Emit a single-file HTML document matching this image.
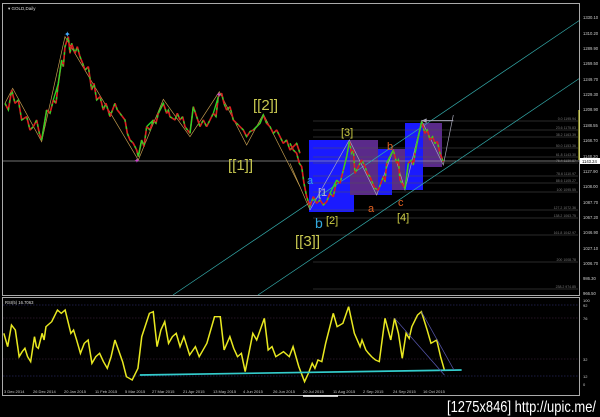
<!DOCTYPE html>
<html><head><meta charset="utf-8"><style>
html,body{margin:0;padding:0;background:#000;width:600px;height:417px;overflow:hidden}
svg{display:block}
text{font-family:"Liberation Sans",sans-serif}
</style></head><body>
<svg width="600" height="417" viewBox="0 0 600 417" xmlns="http://www.w3.org/2000/svg">
<rect width="600" height="417" fill="#000"/>
<rect x="2.5" y="3.5" width="577" height="292" fill="none" stroke="#aaa" stroke-width="1"/>
<text x="8" y="10" font-size="4.5" fill="#ddd">▾ GOLD,Daily</text>
<rect x="309" y="140" width="45" height="72" fill="#1a1aff"/>
<rect x="350" y="140" width="28" height="55" fill="#5a2a8a"/>
<rect x="378" y="149" width="14" height="46" fill="#1a1aff"/>
<rect x="392" y="149" width="31" height="41" fill="#5a2a8a"/>
<rect x="405" y="123" width="18" height="67" fill="#1a1aff"/>
<rect x="423" y="123" width="19" height="44" fill="#5a2a8a"/>
<g stroke="#555" stroke-width="0.6">
<line x1="313" y1="121" x2="578" y2="121"/><line x1="313" y1="130" x2="578" y2="130"/>
<line x1="313" y1="137" x2="578" y2="137"/><line x1="313" y1="148" x2="578" y2="148"/>
<line x1="313" y1="157" x2="578" y2="157"/><line x1="313" y1="163" x2="578" y2="163"/>
<line x1="313" y1="176" x2="578" y2="176"/><line x1="313" y1="183" x2="578" y2="183"/>
<line x1="313" y1="192" x2="578" y2="192"/><line x1="313" y1="210" x2="578" y2="210"/>
<line x1="313" y1="218" x2="578" y2="218"/><line x1="313" y1="235" x2="578" y2="235"/>
<line x1="313" y1="262" x2="578" y2="262"/><line x1="313" y1="289" x2="578" y2="289"/>
</g>
<g font-size="3.5" fill="#777" text-anchor="end">
<text x="576" y="120">0.0 1195.94</text><text x="576" y="129">23.6 1175.83</text>
<text x="576" y="136">38.2 1163.39</text><text x="576" y="147">50.0 1153.36</text>
<text x="576" y="156">61.8 1143.30</text><text x="576" y="162">76.4 1130.87</text>
<text x="576" y="175">78.6 1110.97</text><text x="576" y="182">88.6 1105.27</text>
<text x="576" y="191">100 1095.55</text><text x="576" y="209">127.2 1072.36</text>
<text x="576" y="217">138.2 1063.75</text><text x="576" y="234">161.8 1042.97</text>
<text x="576" y="261">200 1008.78</text><text x="576" y="288">238.2 974.85</text>
</g>
<line x1="3" y1="161" x2="579" y2="161" stroke="#999" stroke-width="0.7"/>
<line x1="173" y1="295" x2="580" y2="20" stroke="#3aa" stroke-width="0.7"/>
<line x1="258" y1="295" x2="580" y2="78" stroke="#3aa" stroke-width="0.7"/>
<g transform="scale(0.3333)">
<polyline fill="none" stroke="#c8a050" stroke-width="2" points="15,310 38,265 125,425 195,110 415,480 490,298 570,410 658,275 740,435 790,342 900,560"/>
<polyline fill="none" stroke="#d82020" stroke-width="5" stroke-linejoin="bevel" points="15,310 25,330 35,270 45,310 55,300 65,360 80,350 90,390 100,380 110,360 118,400 125,420 140,330 150,340 160,300 168,310 175,250 185,180 190,200 195,140 205,110 210,160 215,130 225,160 232,140 240,170 248,190 255,210 265,200 275,270 282,250 290,300 300,290 310,330 318,310 330,350 345,310 352,330 360,340 375,360 382,400 390,420 400,430 410,450 415,470 425,420 432,440 440,380 450,390 460,360 468,370 475,340 490,310 500,340 505,330 510,350 525,360 532,340 540,360 548,350 555,380 570,400 580,320 590,350 600,380 610,360 620,380 640,340 648,350 655,290 665,280 672,310 680,330 690,320 700,360 710,370 720,380 730,390 740,410 750,395 760,390 780,370 790,345 800,370 810,380 820,400 830,390 840,410 850,430 860,420 870,450 880,440 890,430 900,460"/>
<polyline fill="none" stroke="#28d828" stroke-width="4" stroke-dasharray="8,14" points="15,310 25,330 35,270 45,310 55,300 65,360 80,350 90,390 100,380 110,360 118,400 125,420 140,330 150,340 160,300 168,310 175,250 185,180 190,200 195,140 205,110 210,160 215,130 225,160 232,140 240,170 248,190 255,210 265,200 275,270 282,250 290,300 300,290 310,330 318,310 330,350 345,310 352,330 360,340 375,360 382,400 390,420 400,430 410,450 415,470 425,420 432,440 440,380 450,390 460,360 468,370 475,340 490,310 500,340 505,330 510,350 525,360 532,340 540,360 548,350 555,380 570,400 580,320 590,350 600,380 610,360 620,380 640,340 648,350 655,290 665,280 672,310 680,330 690,320 700,360 710,370 720,380 730,390 740,410 750,395 760,390 780,370 790,345 800,370 810,380 820,400 830,390 840,410 850,430 860,420 870,450 880,440 890,430 900,460"/>
<g fill="none" stroke="#28d828" stroke-width="4">
<polyline points="125,420 140,330"/><polyline points="160,300 175,250 185,180"/>
<polyline points="415,470 425,420"/><polyline points="440,380 460,360"/><polyline points="475,340 490,310"/>
<polyline points="570,400 580,320"/><polyline points="640,340 655,290"/>
<polyline points="760,390 780,370 790,345"/>
</g>
</g>
<text x="64" y="37" font-size="8" fill="#4af">✦</text>
<text x="134" y="163" font-size="7" fill="#c4c">✦</text>
<text x="216" y="97" font-size="7" fill="#c4c">✦</text>
<g transform="translate(290,100) scale(0.3333)">
<polyline fill="none" stroke="#c8a050" stroke-width="2" points="0,190 60,330"/>
<polyline fill="none" stroke="#aab" stroke-width="2" points="60,330 178,120 260,285 310,150 345,270 395,62 460,195 490,45"/>
<polyline fill="none" stroke="#d82020" stroke-width="5" stroke-linejoin="bevel" points="0,130 10,150 20,160 28,190 35,200 42,250 50,290 60,320 70,290 80,310 90,300 100,315 110,305 120,280 130,290 140,240 150,250 160,210 170,170 178,125 185,160 190,150 195,220 205,200 215,180 225,200 232,220 240,230 248,250 255,265 265,270 280,230 285,245 290,190 300,170 310,150 320,190 325,180 330,240 345,265 355,190 365,180 370,195 375,160 385,110 395,65 405,100 412,90 420,120 428,110 435,130 442,125 450,160 460,185"/>
<polyline fill="none" stroke="#28d828" stroke-width="4" stroke-dasharray="8,14" points="0,130 10,150 20,160 28,190 35,200 42,250 50,290 60,320 70,290 80,310 90,300 100,315 110,305 120,280 130,290 140,240 150,250 160,210 170,170 178,125 185,160 190,150 195,220 205,200 215,180 225,200 232,220 240,230 248,250 255,265 265,270 280,230 285,245 290,190 300,170 310,150 320,190 325,180 330,240 345,265 355,190 365,180 370,195 375,160 385,110 395,65 405,100 412,90 420,120 428,110 435,130 442,125 450,160 460,185"/>
<g fill="none" stroke="#28d828" stroke-width="4">
<polyline points="120,280 140,240"/><polyline points="160,210 170,170 178,125"/>
<polyline points="290,190 300,170 310,150"/><polyline points="345,265 355,190"/><polyline points="375,160 385,110 395,65"/>
</g>
<polyline fill="none" stroke="#aab" stroke-width="3" points="395,62 490,62"/>
<polygon fill="#aab" points="395,62 410,55 410,69"/>
</g>
<g font-size="15" fill="#c8c850">
<text x="253" y="110">[[2]]</text><text x="228" y="170">[[1]]</text><text x="295" y="246">[[3]]</text>
</g>
<text x="307" y="184" font-size="11" fill="#3ad">a</text>
<text x="315" y="228" font-size="14" fill="#3ad">b</text>
<text x="318" y="196" font-size="11" fill="#bbc">[1</text>
<text x="326" y="224" font-size="11" fill="#cc4">[2]</text>
<text x="341" y="136" font-size="11" fill="#cc4">[3]</text>
<text x="387" y="150" font-size="11" fill="#e06020">b</text>
<text x="368" y="212" font-size="11" fill="#e06020">a</text>
<text x="398" y="206" font-size="11" fill="#e06020">c</text>
<text x="397" y="221" font-size="11" fill="#cc4">[4]</text>
<line x1="579.5" y1="3" x2="579.5" y2="296" stroke="#aaa" stroke-width="1"/>
<g font-size="4.2" fill="#ccc">
<text x="583" y="19">1330.10</text><text x="583" y="35">1310.20</text><text x="583" y="50">1289.90</text>
<text x="583" y="65">1269.50</text><text x="583" y="81">1249.70</text><text x="583" y="96">1229.30</text>
<text x="583" y="111">1208.90</text><text x="583" y="127">1188.55</text><text x="583" y="142">1168.70</text>
<text x="583" y="158">1148.20</text><text x="583" y="173">1127.90</text><text x="583" y="188">1108.00</text>
<text x="583" y="204">1087.70</text><text x="583" y="219">1067.20</text><text x="583" y="234">1046.90</text>
<text x="583" y="250">1027.10</text><text x="583" y="265">1006.70</text><text x="583" y="280">986.30</text>
<text x="583" y="295">966.50</text>
</g>
<line x1="579" y1="110" x2="579" y2="160" stroke="#ee4" stroke-width="1"/>
<rect x="580" y="158" width="20" height="6" fill="#fff"/>
<text x="582" y="163" font-size="4.2" fill="#000">1143.24</text>
<rect x="2.5" y="297.5" width="577" height="98" fill="none" stroke="#aaa" stroke-width="1"/>
<text x="5" y="304" font-size="4.2" fill="#ddd">RSI(5) 16.7063</text>
<g stroke="#3a3a8a" stroke-width="0.6" stroke-dasharray="1.5,1.5">
<line x1="3" y1="305" x2="578" y2="305"/><line x1="3" y1="376" x2="578" y2="376"/>
</g>
<g stroke="#4a2a4a" stroke-width="0.6" stroke-dasharray="1.5,1.5">
<line x1="3" y1="318" x2="578" y2="318"/><line x1="3" y1="359" x2="578" y2="359"/>
</g>
<g font-size="4" fill="#ccc">
<text x="583" y="302">100</text><text x="583" y="307">92</text><text x="583" y="320">76</text>
<text x="583" y="361">32</text><text x="583" y="378">12</text><text x="583" y="386">0</text>
</g>
<g transform="translate(0,290) scale(0.3831,0.3333)">
<polyline fill="none" stroke="#e8e820" stroke-width="4" points="10,130 20,170 30,105 40,120 50,200 58,185 65,175 72,200 80,215 90,140 95,170 100,175 110,130 115,150 120,110 135,95 150,60 160,70 170,60 185,130 192,120 200,150 210,190 220,160 230,150 240,220 250,200 260,190 270,215 280,235 290,200 300,150 320,215 330,260 345,270 360,235 370,140 390,70 400,65 410,170 420,120 430,95 440,160 450,140 460,130 470,170 480,140 495,195 510,170 520,200 530,180 540,160 560,80 575,80 585,180 600,140 610,175 620,200 630,190 640,245 660,130 670,150 690,85 700,180 710,170 720,200 740,185 755,200 765,170 780,230 795,275 805,250 815,220 822,235 830,210 840,215 850,160 870,70 880,110 895,100 910,50 925,130 940,170 945,150 955,180 962,190 970,200 980,210 990,215 1005,85 1020,150 1030,85 1040,130 1050,205 1060,130 1068,145 1075,110 1090,75 1100,65 1115,120 1125,160 1140,150 1150,200 1160,240"/>
<polyline fill="none" stroke="#3cc" stroke-width="5" points="365,255 1205,240"/>
<polyline fill="none" stroke="#55a" stroke-width="2" points="1030,85 1160,255"/>
<polyline fill="none" stroke="#55a" stroke-width="2" points="1100,65 1185,240"/>
</g>
<g font-size="4" fill="#ccc">
<text x="4" y="393">3 Dec 2014</text><text x="33" y="393">26 Dec 2014</text><text x="64" y="393">20 Jan 2015</text>
<text x="95" y="393">11 Feb 2015</text><text x="125" y="393">5 Mar 2015</text><text x="152" y="393">27 Mar 2015</text>
<text x="183" y="393">21 Apr 2015</text><text x="213" y="393">13 May 2015</text><text x="243" y="393">4 Jun 2015</text>
<text x="273" y="393">26 Jun 2015</text><text x="303" y="393">20 Jul 2015</text><text x="333" y="393">11 Aug 2015</text>
<text x="363" y="393">2 Sep 2015</text><text x="393" y="393">24 Sep 2015</text><text x="423" y="393">16 Oct 2015</text>
</g>
<line x1="303" y1="396" x2="338" y2="396" stroke="#fff" stroke-width="1.5"/>
<text x="596" y="412" font-size="16" fill="#fff" text-anchor="end" textLength="149" lengthAdjust="spacingAndGlyphs">[1275x846] http://upic.me/</text>
</svg>
</body></html>
